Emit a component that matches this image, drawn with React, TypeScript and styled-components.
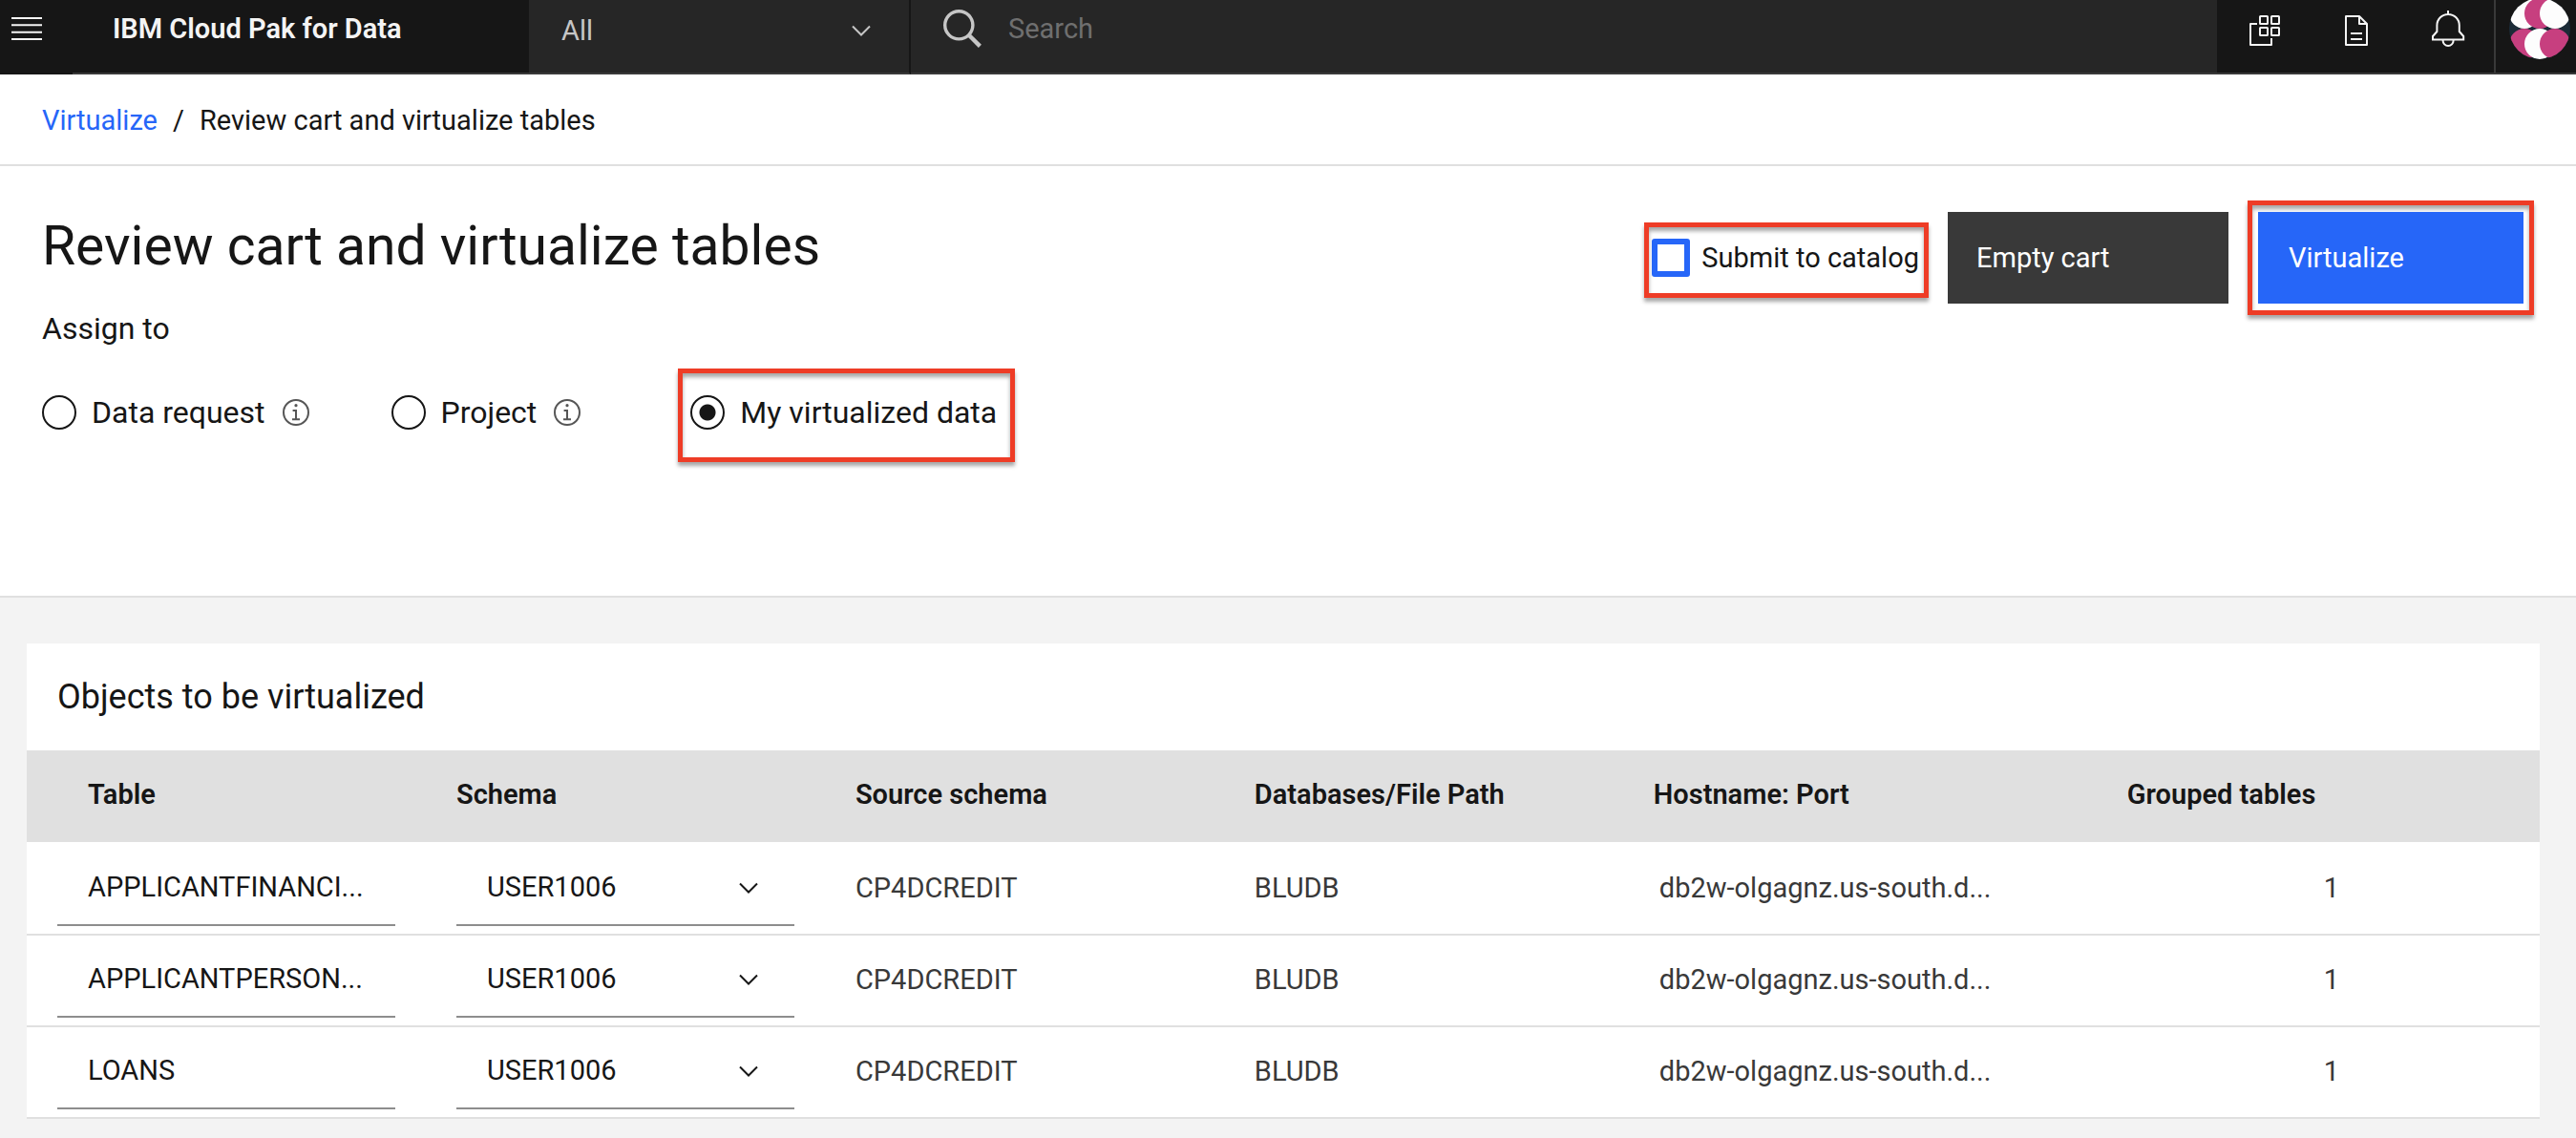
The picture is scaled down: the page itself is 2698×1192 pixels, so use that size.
import React, { useState } from "react";
import styled, { createGlobalStyle, css } from "styled-components";

const color = {
  ink: "#161616",
  inkSoft: "#393939",
  shell: "#262626",
  line: "#e0e0e0",
  page: "#f3f3f3",
  blue: "#2666f8",
  red: "#ee3c26",
  field: "#8d8d8d",
};

const GlobalStyle = createGlobalStyle`
  *, *::before, *::after { box-sizing: border-box; }
  body { margin: 0; background: ${color.page}; }
  body, button, input, select {
    font-family: Roboto, "Liberation Sans", sans-serif;
    font-size: 29px;
    line-height: 40px;
    color: ${color.ink};
  }
  button, input, select { margin: 0; padding: 0; border: 0; border-radius: 0; background: none; }
  button { text-align: left; cursor: pointer; }
  svg { display: block; flex: none; }
`;

/* ---------- Top bar ---------- */

const TopBar = styled.header`
  display: flex;
  height: 78px;
  overflow: hidden;
  background: ${color.ink};
`;

const barPart = css`
  display: flex;
  align-items: center;
  flex: none;
  padding-bottom: 16px;
  border-bottom: 2px solid ${color.inkSoft};
`;

const MenuButton = styled.button`
  ${barPart}
  width: 76px;
  padding-left: 12px;
  border-bottom-color: ${color.ink};
`;

const Brand = styled.div`
  ${barPart}
  width: 478px;
  padding-left: 42px;
  color: #f4f4f4;
  font-weight: 600;
`;

const Scope = styled.div`
  ${barPart}
  width: 400px;
  padding: 0 40px 12px 34px;
  background: ${color.shell};
  border-right: 2px solid ${color.ink};
`;

const SearchBox = styled.label`
  ${barPart}
  flex: 1;
  gap: 28px;
  padding-left: 34px;
  background: ${color.shell};
`;

const SearchInput = styled.input`
  flex: 1;
  min-width: 0;
  color: #f4f4f4;
  outline: none;
  &::placeholder { color: #6f6f6f; opacity: 1; }
`;

const Tools = styled.nav`
  ${barPart}
  padding-left: 2px;
`;

const ToolButton = styled.button`
  display: flex;
  justify-content: center;
  width: 96px;
`;

const AvatarButton = styled.button`
  ${barPart}
  width: 86px;
  padding-left: 14px;
  border-left: 2px solid ${color.inkSoft};
`;

/* ---------- Heading ---------- */

const Breadcrumb = styled.nav`
  display: flex;
  gap: 16px;
  padding: 28px 44px 26px;
  background: #fff;
  border-bottom: 2px solid ${color.line};
`;

const Crumb = styled.a`
  color: ${color.blue};
  text-decoration: none;
`;

const Heading = styled.section`
  display: flex;
  justify-content: space-between;
  align-items: flex-start;
  padding: 36px 44px 140px;
  background: #fff;
  border-bottom: 2px solid ${color.line};
`;

const Title = styled.h1`
  margin: 16px 0 34px;
  font-size: 57px;
  line-height: 64px;
  font-weight: 400;
`;

const Choices = styled.fieldset`
  margin: 0;
  padding: 0;
  border: 0;
  font-size: 32px;
`;

const Legend = styled.legend`
  padding: 0;
  margin-bottom: 22px;
`;

const ChoiceRow = styled.div`
  display: flex;
  align-items: flex-start;
  gap: 86px;
`;

const highlight = css`
  border: 5px solid ${color.red};
  box-shadow: 0 4px 4px rgba(0, 0, 0, 0.35), inset 0 4px 4px rgba(0, 0, 0, 0.35);
`;

const Choice = styled.div<{ $marked?: boolean }>`
  display: flex;
  align-items: center;
  gap: 18px;
  margin-top: 28px;
  ${(p) =>
    p.$marked &&
    css`
      ${highlight}
      margin: 0 0 0 16px;
      padding: 23px 14px 29px 8px;
    `}
`;

const ChoiceLabel = styled.label`
  display: flex;
  align-items: center;
  gap: 16px;
  line-height: 36px;
`;

const Radio = styled.input.attrs({ type: "radio" })`
  appearance: none;
  width: 36px;
  height: 36px;
  padding: 8px;
  border: 2px solid ${color.ink};
  border-radius: 50%;
  &:checked {
    background: radial-gradient(circle, ${color.ink} 8px, transparent 9px);
  }
`;

const InfoButton = styled.button`
  line-height: 0;
`;

const Actions = styled.div`
  display: flex;
  align-items: center;
  gap: 20px;
`;

const SubmitLabel = styled.label`
  ${highlight}
  display: flex;
  align-items: center;
  gap: 12px;
  margin-top: 4px;
  padding: 12px 5px 17px 3px;
`;

const Checkbox = styled.input.attrs({ type: "checkbox" })`
  appearance: none;
  width: 40px;
  height: 40px;
  border: 6px solid ${color.blue};
  border-radius: 3px;
  &:checked { background: ${color.blue}; }
`;

const ActionButton = styled.button<{ $primary?: boolean }>`
  display: block;
  width: ${(p) => (p.$primary ? 278 : 294)}px;
  height: 96px;
  padding: 0 ${(p) => (p.$primary ? 32 : 30)}px;
  color: #fff;
  background: ${(p) => (p.$primary ? color.blue : color.inkSoft)};
`;

const MarkedAction = styled.div`
  ${highlight}
  padding: 7px 6px;
`;

/* ---------- Table ---------- */

const Content = styled.main`
  padding: 48px 38px 20px 28px;
`;

const Card = styled.section`
  background: #fff;
`;

const CardTitle = styled.h2`
  margin: 0;
  padding: 36px 32px 36px;
  font-size: 36px;
  line-height: 40px;
  font-weight: 400;
`;

const Table = styled.table`
  width: 100%;
  table-layout: fixed;
  border-collapse: separate;
  border-spacing: 0;
`;

const Column = styled.col`
  width: 15.88%;
`;

const Head = styled.th<{ $left?: number }>`
  height: 96px;
  padding: 0 0 4px ${(p) => p.$left ?? 32}px;
  background: ${color.line};
  font-weight: 600;
  text-align: left;
`;

const Cell = styled.td<{ $left?: number }>`
  height: 96px;
  padding: 0 32px 2px ${(p) => p.$left ?? 32}px;
  border-bottom: 2px solid ${color.line};
  color: ${color.inkSoft};
  white-space: nowrap;
  tr:first-child > & {
    padding-top: 2px;
    height: 98px;
  }
`;

const fieldBox = css`
  width: 100%;
  height: 80px;
  padding: 0 32px;
  border-bottom: 2px solid ${color.field};
`;

const NameInput = styled.input`
  ${fieldBox}
  display: block;
  padding-right: 16px;
  text-overflow: ellipsis;
`;

const Picker = styled.div<{ $dark?: boolean }>`
  display: grid;
  flex: 1;
  align-items: center;
  > * { grid-area: 1 / 1; }
  > svg { justify-self: end; pointer-events: none; margin-right: ${(p) => (p.$dark ? 0 : 38)}px; }
`;

const Select = styled.select<{ $dark?: boolean }>`
  appearance: none;
  outline: none;
  ${(p) => (p.$dark ? css`color: #c6c6c6; width: 100%;` : fieldBox)}
`;

/* ---------- Icons ---------- */

const Chevron = ({ stroke = color.ink }: { stroke?: string }) => (
  <svg width="20" height="12" viewBox="0 0 20 12" fill="none" stroke={stroke} strokeWidth="2">
    <path d="M1 1.5 10 10.5 19 1.5" />
  </svg>
);

const MenuIcon = () => (
  <svg width="32" height="24" viewBox="0 0 32 24" fill="#f4f4f4">
    <path d="M0 0h32v2H0zM0 7.3h32v2H0zM0 14.7h32v2H0zM0 22h32v2H0z" />
  </svg>
);

const SearchIcon = () => (
  <svg width="40" height="40" viewBox="0 0 40 40" fill="none" stroke="#c6c6c6">
    <circle cx="16.3" cy="16.3" r="14.6" strokeWidth="3.4" />
    <path d="M27 27 38.4 38.4" strokeWidth="4.4" />
  </svg>
);

const line = { width: 40, height: 40, viewBox: "0 0 40 40", fill: "none", stroke: "#f4f4f4", strokeWidth: 2 };

const AppsIcon = () => (
  <svg {...line} strokeLinejoin="round">
    <path d="M12 15H5v22h22v-7" />
    <rect x="15" y="7" width="8" height="8" rx="0.6" />
    <rect x="27" y="7" width="8" height="8" rx="0.6" />
    <rect x="15" y="19" width="8" height="8" rx="0.6" />
    <rect x="27" y="19" width="8" height="8" rx="0.6" />
  </svg>
);

const DocumentIcon = () => (
  <svg {...line} strokeLinejoin="round">
    <path d="M9 7h14l8 8v22H9zM23 7v8h8M14 25h12M14 31h12" />
  </svg>
);

const BellIcon = () => (
  <svg {...line}>
    <path d="M20 1v4M4 31.6V28l4.4-5v-6.4a11.7 11.7 0 0 1 23.4 0V23l4.4 5v3.6zM14.6 32.4a5.5 5.6 0 0 0 11 0" />
  </svg>
);

const InfoIcon = () => (
  <svg width="28" height="28" viewBox="0 0 28 28" fill="none" stroke="#565656" strokeWidth="2">
    <circle cx="14" cy="14" r="13" />
    <circle cx="14" cy="6.7" r="1.6" fill="#565656" stroke="none" />
    <path d="M10.6 12H14v9.4M10 21.2h8" />
  </svg>
);

const Avatar = () => (
  <svg width="64" height="64" viewBox="0 0 64 64">
    <clipPath id="avatar-clip">
      <circle cx="32" cy="32" r="32" />
    </clipPath>
    <g clipPath="url(#avatar-clip)">
      <rect width="64" height="64" fill="#1b2b37" />
      <circle cx="16" cy="16" r="16" fill="#fdfdfd" />
      <circle cx="32" cy="16" r="16" fill="#c73f7f" />
      <circle cx="48" cy="16" r="16" fill="#fdfdfd" />
      <circle cx="16" cy="48" r="16" fill="#c73f7f" />
      <circle cx="32" cy="48" r="16" fill="#fdfdfd" />
      <circle cx="48" cy="48" r="16" fill="#c73f7f" />
    </g>
  </svg>
);

/* ---------- Page ---------- */

const targets = [
  { id: "request", label: "Data request", info: true },
  { id: "project", label: "Project", info: true },
  { id: "mine", label: "My virtualized data", info: false },
];

const rows = ["APPLICANTFINANCI...", "APPLICANTPERSON...", "LOANS"].map((name) => ({
  name,
  schema: "USER1006",
  source: "CP4DCREDIT",
  database: "BLUDB",
  host: "db2w-olgagnz.us-south.d...",
  grouped: 1,
}));

export default function App() {
  const [target, setTarget] = useState("mine");

  return (
    <>
      <GlobalStyle />
      <TopBar>
        <MenuButton aria-label="Menu">
          <MenuIcon />
        </MenuButton>
        <Brand>IBM Cloud Pak for Data</Brand>
        <Scope>
          <Picker $dark>
            <Select $dark aria-label="Search scope">
              <option>All</option>
            </Select>
            <Chevron stroke="#c6c6c6" />
          </Picker>
        </Scope>
        <SearchBox>
          <SearchIcon />
          <SearchInput type="search" placeholder="Search" aria-label="Search" />
        </SearchBox>
        <Tools>
          <ToolButton aria-label="Services">
            <AppsIcon />
          </ToolButton>
          <ToolButton aria-label="Documents">
            <DocumentIcon />
          </ToolButton>
          <ToolButton aria-label="Notifications">
            <BellIcon />
          </ToolButton>
        </Tools>
        <AvatarButton aria-label="Profile">
          <Avatar />
        </AvatarButton>
      </TopBar>

      <Breadcrumb aria-label="Breadcrumb">
        <Crumb href="#">Virtualize</Crumb>
        <span>/</span>
        <span>Review cart and virtualize tables</span>
      </Breadcrumb>

      <Heading>
        <div>
          <Title>Review cart and virtualize tables</Title>
          <Choices>
            <Legend>Assign to</Legend>
            <ChoiceRow>
              {targets.map((t) => (
                <Choice key={t.id} $marked={t.id === "mine"}>
                  <ChoiceLabel>
                    <Radio name="target" checked={target === t.id} onChange={() => setTarget(t.id)} />
                    {t.label}
                  </ChoiceLabel>
                  {t.info && (
                    <InfoButton type="button" aria-label={`About ${t.label}`}>
                      <InfoIcon />
                    </InfoButton>
                  )}
                </Choice>
              ))}
            </ChoiceRow>
          </Choices>
        </div>
        <Actions>
          <SubmitLabel>
            <Checkbox />
            Submit to catalog
          </SubmitLabel>
          <ActionButton>Empty cart</ActionButton>
          <MarkedAction>
            <ActionButton $primary>Virtualize</ActionButton>
          </MarkedAction>
        </Actions>
      </Heading>

      <Content>
        <Card>
          <CardTitle>Objects to be virtualized</CardTitle>
          <Table>
            <colgroup>
              <Column />
              <Column />
              <Column />
              <Column />
              <Column />
              <col />
            </colgroup>
            <thead>
              <tr>
                <Head $left={64}>Table</Head>
                <Head>Schema</Head>
                <Head>Source schema</Head>
                <Head>Databases/File Path</Head>
                <Head>Hostname: Port</Head>
                <Head $left={110}>Grouped tables</Head>
              </tr>
            </thead>
            <tbody>
              {rows.map((r) => (
                <tr key={r.name}>
                  <Cell>
                    <NameInput defaultValue={r.name} aria-label="Table name" />
                  </Cell>
                  <Cell>
                    <Picker>
                      <Select aria-label={`Schema for ${r.name}`}>
                        <option>{r.schema}</option>
                      </Select>
                      <Chevron />
                    </Picker>
                  </Cell>
                  <Cell>{r.source}</Cell>
                  <Cell>{r.database}</Cell>
                  <Cell $left={38}>{r.host}</Cell>
                  <Cell $left={316}>{r.grouped}</Cell>
                </tr>
              ))}
            </tbody>
          </Table>
        </Card>
      </Content>
    </>
  );
}
